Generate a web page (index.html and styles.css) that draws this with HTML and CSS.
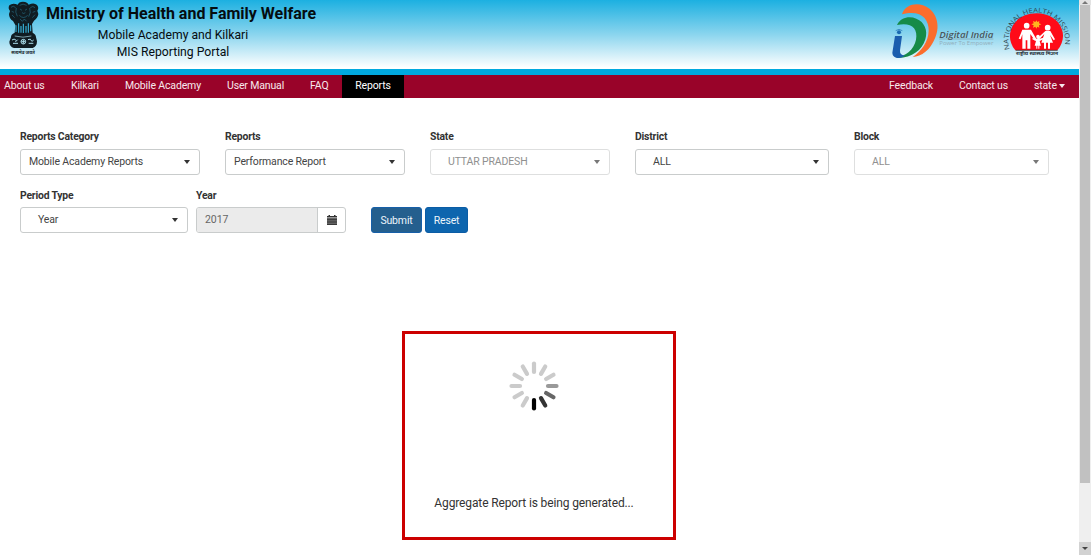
FILE: index.html
```html
<!DOCTYPE html>
<html lang="en">
<head>
<meta charset="utf-8">
<title>MIS Reporting Portal</title>
<link rel="stylesheet" href="styles.css">
</head>
<body>
<div class="page">
  <header class="banner">
    <svg class="emblem" viewBox="0 0 120 180">
      <g fill="#101c22">
        <path d="M57 8Q70 2 82 9L86 14Q102 6 111 15Q118 24 112 32L115 42Q113 55 102 62L96 72L98 98Q108 103 108 112L111 124Q111 139 98 144H42Q28 140 28 125L33 112Q32 103 44 98L46 75L39 63Q27 56 27 42L30 33Q23 25 28 16Q38 7 53 14Z"/>
      </g>
      <g fill="none" stroke="#39bde6" stroke-width="2.2">
        <path d="M48 76v20M56 70v28M63 78v20M70 71v28M78 78v20M85 70v28M92 76v18" stroke-width="3.2"/>
        <path d="M33 22q7-7 14 1M91 23q8-7 14 0M59 16q10-7 21 0M60 27l6 4M75 31l6-4M35 34l7 3M98 37l8-3M66 38q5 5 10 0M49 24q-5 12 3 25M89 24q5 14-3 26M36 45l8 8M97 53l8-9M58 46q12 13 25 0M60 57l7 7 6-7 7 7" stroke-width="1.5" opacity=".65"/>
      </g>
      <g fill="none" stroke="#a9dcea" stroke-width="3">
        <path d="M44 108q25 7 50 0" stroke-width="2"/>
        <circle cx="70" cy="125" r="7"/>
        <path d="M36 120q6-6 13 1M39 130h15M53 119l-7 7M84 119q8-5 11 4M86 130h14M101 120l-6 5M64 125h12M70 119v12"/>
      </g>
      <text class="motto" x="69" y="161" text-anchor="middle" textLength="71" lengthAdjust="spacingAndGlyphs">सत्यमेव जयते</text>
    </svg>
    <div class="titles">
      <h1>Ministry of Health and Family Welfare</h1>
      <p class="sub-a">Mobile Academy and Kilkari</p>
      <p class="sub-b">MIS Reporting Portal</p>
    </div>
    <svg class="digital" viewBox="0 0 360 195">
      <path fill="#fb6d2d" d="M66 43C75 15 105 8 129 16C169 29 183 76 165 115C151 149 125 171 98 171C124 153 145 126 146 92C147 54 120 28 66 43Z"/>
      <path fill="#168b48" d="M51 75C63 51 89 48 109 56C134 66 144 91 136 118C126 151 96 173 55 174L47 170C75 171 102 149 108 119C115 83 92 66 51 75Z"/>
      <path fill="#1a5eae" d="M45 108H66L60 151C59 162 65 167 76 166C64 177 38 178 37 158Z"/>
      <circle cx="57" cy="97" r="6" fill="#1a6bb2"/>
      <path d="M47 92q10-8 20 0M50 98q7-5 14 0" fill="none" stroke="#1a6bb2" stroke-width="2"/>
      <text class="digital-name" x="178" y="113" textLength="162" lengthAdjust="spacingAndGlyphs">Digital India</text>
      <path d="M178 117h162" stroke="#68777c" stroke-width="1.3"/>
      <text class="digital-tag" x="178" y="136" textLength="162" lengthAdjust="spacingAndGlyphs">Power To Empower</text>
    </svg>
    <svg class="mission" viewBox="0 0 240 195">
      <path fill="#ff0b18" d="M61 151C45 132 41 108 48 89C58 58 88 40 125 40C162 40 191 59 201 89C208 108 203 133 187 151Z"/>
      <path id="arc" d="M44 148A85 86 0 1 1 207 148" fill="none"/>
      <text class="mission-name"><textPath href="#arc" textLength="304" lengthAdjust="spacingAndGlyphs">NATIONAL HEALTH MISSION</textPath></text>
      <g fill="#fff">
        <circle cx="95" cy="77" r="8.5"/><circle cx="158" cy="83" r="8.5"/><circle cx="129" cy="110" r="5.5"/>
        <path d="M82 89h26l16 28-4 5-14-20v44H97v-25h-5v25H82v-43l-5 15-6-2Z"/>
        <path d="M151 93h15l14 25-4 3-11-16 9 23h-9v18h-6v-18h-6v18h-6v-18h-8l9-26-18 19-4-5Z"/>
        <path d="M125 116h8l13-3v5l-12 5 4 14h-5v9h-3v-9h-3v9h-3v-9h-5l4-14-11-5 1-4Z"/>
      </g>
      <path fill="#ffb51f" d="M124 61l3 5 6-3-1 7 7 3-7 3 1 7-6-3-3 6-3-6-7 3 2-7-7-3 7-3-2-7 7 3Z"/>
      <path d="M62 151h126" stroke="#222" stroke-width="2"/>
      <text class="mission-hindi" x="126" y="164" text-anchor="middle" textLength="126" lengthAdjust="spacingAndGlyphs">राष्ट्रीय स्वास्थ्य मिशन</text>
    </svg>
  </header>
  <nav class="nav">
    <a class="n-about">About us</a><a class="n-kil">Kilkari</a><a class="n-mob">Mobile Academy</a><a class="n-man">User Manual</a><a class="n-faq">FAQ</a><a class="active">Reports</a>
    <span class="spacer"></span>
    <a class="n-feed">Feedback</a><a class="n-contact">Contact us</a><a class="n-state">state<i class="caret"></i></a>
  </nav>
  <main class="content">
    <div class="row row-one">
      <div class="field"><label>Reports Category</label><div class="select">Mobile Academy Reports<i class="caret"></i></div></div>
      <div class="field"><label>Reports</label><div class="select">Performance Report<i class="caret"></i></div></div>
      <div class="field"><label>State</label><div class="select indent disabled">UTTAR PRADESH<i class="caret"></i></div></div>
      <div class="field"><label>District</label><div class="select indent">ALL<i class="caret"></i></div></div>
      <div class="field"><label>Block</label><div class="select indent disabled">ALL<i class="caret"></i></div></div>
    </div>
    <div class="row row-two">
      <div class="field period"><label>Period Type</label><div class="select indent">Year<i class="caret"></i></div></div>
      <div class="field year"><label>Year</label>
        <div class="date"><span class="value">2017</span><span class="addon">
          <svg class="calendar" viewBox="0 0 10 10"><path fill="#333" d="M0 1h1.5V0h1.5v1h4V0h1.5v1H10v1.6H0zM0 3.2h10V10H0z"/><path stroke="#bbb" stroke-width=".4" d="M0 5.3h10M0 7h10M0 8.6h10"/></svg>
        </span></div>
      </div>
      <div class="buttons"><button class="btn submit">Submit</button><button class="btn">Reset</button></div>
    </div>
    <section class="loading">
      <svg class="spinner" viewBox="-25 -25 50 50" stroke-width="4.2" stroke="#cbcbcb">
        <g stroke-linecap="round">
          <path d="M0-14V-22.5"/><path d="M0-14V-22.5" transform="rotate(30)"/><path d="M0-14V-22.5" transform="rotate(60)"/>
          <path d="M0-14V-22.5" transform="rotate(90)" stroke="#999"/><path d="M0-14V-22.5" transform="rotate(120)" stroke="#666"/>
          <path d="M0-14V-22.5" transform="rotate(150)" stroke="#333"/><path d="M0-14V-22.5" transform="rotate(180)" stroke="#000"/>
          <path d="M0-14V-22.5" transform="rotate(210)"/><path d="M0-14V-22.5" transform="rotate(240)"/><path d="M0-14V-22.5" transform="rotate(270)"/>
          <path d="M0-14V-22.5" transform="rotate(300)"/><path d="M0-14V-22.5" transform="rotate(330)"/>
        </g>
      </svg>
      <p>Aggregate Report is being generated...</p>
    </section>
  </main>
</div>
<aside class="scrollbar"><span class="arrow-box"><i class="up"></i></span><span class="thumb"></span><span class="track"></span><span class="arrow-box bottom"><i class="down"></i></span></aside>
</body>
</html>
```
FILE: styles.css
```css
* { box-sizing: border-box; }
body { margin: 0; display: flex; height: 555px; overflow: hidden; background: #fff; color: #333; font: 10.5px/16px Roboto, "Liberation Sans", sans-serif; letter-spacing: -0.15px; }
h1, p { margin: 0; letter-spacing: 0; }
.page { width: 1079px; flex: none; }
.banner { display: flex; height: 75px; border-bottom: 6px solid #00a9df; background: linear-gradient(#1cb0e1, #8bd5ee 50%, #fff 98%); }
.emblem { width: 40px; height: 60px; flex: none; }
.motto { font: bold 14px "Noto Sans", "Noto Sans Devanagari", sans-serif; fill: #17252b; letter-spacing: 0; }
.titles { width: 282px; text-align: center; color: #050c10; }
h1 { margin-top: 3px; font-size: 16px; line-height: 22px; font-weight: 700; white-space: nowrap; }
.sub-a, .sub-b { font-size: 12.2px; line-height: 17px; padding-right: 16px; }
.sub-a { padding-top: 2px; }
.digital { width: 120px; height: 65px; margin-left: 558px; flex: none; }
.mission { width: 80px; height: 65px; margin-left: -5px; flex: none; }
.digital-name { font: italic 600 24px "Open Sans", sans-serif; fill: #4b565b; letter-spacing: 0; }
.digital-tag { font: 16px "Open Sans", sans-serif; fill: #91aebb; letter-spacing: 0; }
.mission-name { font: 20px "Open Sans", sans-serif; fill: #304650; letter-spacing: 0; }
.mission-hindi { font: bold 13px "Noto Sans", "Noto Sans Devanagari", sans-serif; fill: #26323b; letter-spacing: 0; }
.nav { display: flex; height: 23px; line-height: 22px; background: #990329; color: #f7e8ec; padding-left: 4px; white-space: nowrap; }
.n-about { width: 67px; }
.n-kil { width: 54px; }
.n-mob { width: 102px; }
.n-man { width: 83px; }
.n-faq { width: 32px; }
.active { width: 62px; background: #000; color: #fff; text-align: center; }
.spacer { flex: 1; }
.n-feed { width: 70px; }
.n-contact { width: 75px; }
.n-state { width: 45px; }
.caret { display: inline-block; border: solid transparent; border-width: 4px 4px 0; border-top-color: currentColor; }
.n-state .caret { border-width: 4px 3px 0; margin-left: 2px; vertical-align: 1px; }
.content { padding: 31px 0 0 20px; }
.row { display: flex; }
.row-one { display: grid; grid-template-columns: 180px 180px 180px 194px 195px; column-gap: 25px; }
.field label { display: block; height: 20px; line-height: 16px; font-weight: 700; font-size: 10.4px; letter-spacing: -0.2px; }
.select { display: flex; height: 26px; align-items: center; justify-content: space-between; padding: 0 8px; border: 1px solid #c9cccc; border-radius: 3px; color: #444; }
.select .caret { color: #333; border-width: 4px 3.5px 0; margin-right: 1px; }
.indent { padding-left: 17px; }
.disabled { color: #909090; border-color: #dedfdf; }
.select.disabled .caret { color: #777; }
.row-two { margin-top: 12px; gap: 8px; align-items: flex-end; }
.row-two label { line-height: 18px; }
.period { width: 168px; }
.year { width: 150px; }
.date { display: flex; height: 26px; border: 1px solid #c9cccc; border-radius: 3px; overflow: hidden; }
.value { width: 121px; padding-left: 8px; line-height: 24px; background: #ebebeb; border-right: 1px solid #c9cccc; color: #666; letter-spacing: -0.05px; }
.addon { flex: 1; display: flex; align-items: center; justify-content: center; }
.calendar { width: 10px; height: 10px; }
.buttons { display: flex; gap: 3px; margin-left: 17px; }
.btn { width: 43px; height: 26px; padding: 0; border: 1px solid #0b5ca5; border-radius: 3px; background: #0d65ae; color: #edf5fb; font: 10.5px Roboto, sans-serif; letter-spacing: -0.15px; }
.submit { width: 51px; background: #245f8e; border-color: #165fa8; }
.loading { display: flex; flex-direction: column; align-items: center; width: 274px; height: 209px; margin: 98px 0 0 382px; padding: 27px 10px 0 0; border: 3px solid #c00; }
.spinner { width: 50px; height: 50px; }
.loading p { margin-top: 83px; font-size: 12px; letter-spacing: -0.13px; line-height: 18px; white-space: nowrap; }
.scrollbar { display: flex; flex-direction: column; width: 12px; height: 555px; background: #efefef; }
.arrow-box { display: flex; height: 5px; background: #e2e2e2; justify-content: center; align-items: center; }
.bottom { height: 13px; background: #d2d2d2; }
.thumb { width: 10px; height: 478px; margin-left: 1px; background: #c1c1c1; }
.track { flex: 1; }
.up, .down { border: 3px solid transparent; }
.up { border-top: 0; border-bottom-color: #777; }
.down { border-bottom: 0; border-top-color: #444; }
```
